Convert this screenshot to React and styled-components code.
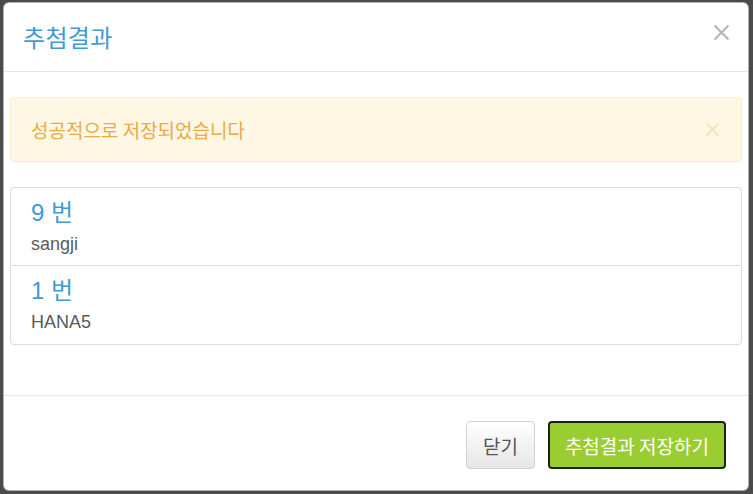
import React from "react";
import styled, { createGlobalStyle } from "styled-components";

const Global = createGlobalStyle`
  html, body { margin: 0; padding: 0; background: #4b4b4b; }
  body { font-family: "Liberation Sans", "Noto Sans CJK KR", sans-serif; }
  * { box-sizing: border-box; }
`;

const Backdrop = styled.div`
  width: 753px;
  height: 494px;
  padding: 2px 4px 4px 3px;
  overflow: hidden;
`;

const Modal = styled.div`
  width: 746px;
  height: 489px;
  background: #fff;
  border: 1px solid rgba(0, 0, 0, 0.3);
  border-radius: 6px;
  display: flex;
  flex-direction: column;
`;

const Header = styled.div`
  height: 69px;
  display: flex;
  align-items: center;
  justify-content: space-between;
  padding: 0 18px 2px 19px;
  border-bottom: 1px solid #e5e5e5;
`;

const Title = styled.h4`
  margin: 0;
  font-family: "Noto Sans CJK KR", sans-serif;
  font-weight: 400;
  font-size: 24px;
  color: #3f9ad3;
  letter-spacing: 0.3px;
`;

const CloseBtn = styled.button`
  border: 0;
  background: none;
  padding: 0;
  display: flex;
  color: ${(p) => p.$color};
  cursor: pointer;
  margin-bottom: ${(p) => p.$lift || "0"};
`;

const Body = styled.div`
  flex: 1;
  padding: 25px 6px 0 6px;
  display: flex;
  flex-direction: column;
  gap: 25px;
`;

const Alert = styled.div`
  height: 65px;
  background: #fdf7e4;
  border: 1px solid #f8ecc9;
  border-radius: 4px;
  display: flex;
  align-items: center;
  justify-content: space-between;
  padding: 0 21px 0 20px;
`;

const AlertText = styled.span`
  font-family: "Noto Sans CJK KR", sans-serif;
  font-size: 19px;
  color: #eca944;
`;

const List = styled.div`
  border: 1px solid #dcdcdc;
  border-radius: 4px;
`;

const Item = styled.div`
  height: 78px;
  padding: 10px 20px 0;
  border-bottom: ${(p) => (p.$last ? "0" : "1px solid #dcdcdc")};
`;

const ItemTitle = styled.div`
  font-size: 24px;
  line-height: 30px;
  color: #3f9ad3;
  font-family: "Liberation Sans", "Noto Sans CJK KR", sans-serif;
`;

const ItemSub = styled.div`
  font-size: 18px;
  line-height: 32px;
  color: #5a5a5a;
`;

const Footer = styled.div`
  height: 95px;
  border-top: 1px solid #e5e5e5;
  display: flex;
  justify-content: flex-end;
  align-items: flex-start;
  gap: 13px;
  padding: 25px 22px 0 0;
`;

const Button = styled.button`
  height: 48px;
  padding: 0 ${(p) => (p.$primary ? "15px" : "16px")};
  border-radius: 4px;
  font-family: "Noto Sans CJK KR", sans-serif;
  font-size: 19px;
  cursor: pointer;
  border: ${(p) => (p.$primary ? "2px solid #1b2410" : "1px solid #d2d2d2")};
  background: ${(p) =>
    p.$primary ? "#9acd32" : "linear-gradient(#ffffff, #e6e6e6)"};
  color: ${(p) => (p.$primary ? "#fff" : "#555")};
`;

const X = ({ size = 16, sw = 2.2 }) => (
  <svg width={size} height={size} viewBox="0 0 16 16" fill="none">
    <path d="M1.5 1.5 L14.5 14.5 M14.5 1.5 L1.5 14.5" stroke="currentColor" strokeWidth={sw} />
  </svg>
);

const results = [
  { no: 9, name: "sangji" },
  { no: 1, name: "HANA5" },
];

export default function App() {
  return (
    <Backdrop>
      <Global />
      <Modal>
        <Header>
          <Title>추첨결과</Title>
          <CloseBtn $color="#b5b5b5" $lift="8px">
            <X size={17} sw={2} />
          </CloseBtn>
        </Header>
        <Body>
          <Alert>
            <AlertText>성공적으로 저장되었습니다</AlertText>
            <CloseBtn $color="#f3e3bd">
              <X size={15} sw={2.2} />
            </CloseBtn>
          </Alert>
          <List>
            {results.map((r, i) => (
              <Item key={i} $last={i === results.length - 1}>
                <ItemTitle>{r.no} 번</ItemTitle>
                <ItemSub>{r.name}</ItemSub>
              </Item>
            ))}
          </List>
        </Body>
        <Footer>
          <Button>닫기</Button>
          <Button $primary>추첨결과 저장하기</Button>
        </Footer>
      </Modal>
    </Backdrop>
  );
}
